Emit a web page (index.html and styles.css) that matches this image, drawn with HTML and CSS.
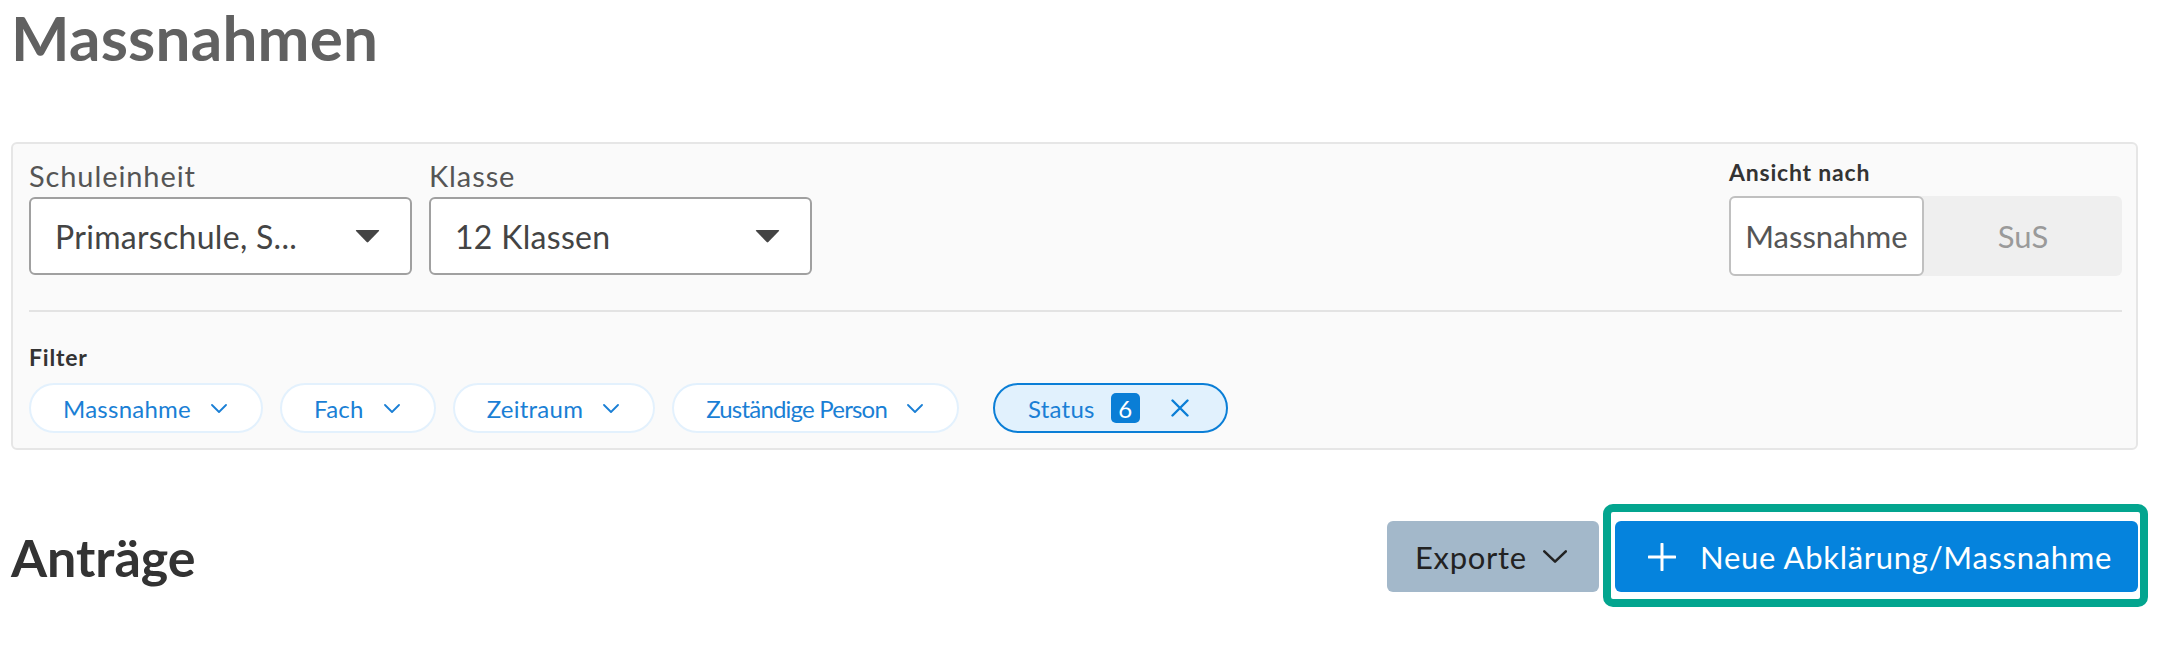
FILE: index.html
```html
<!DOCTYPE html>
<html lang="de">
<head>
<meta charset="utf-8">
<title>Massnahmen</title>
<link rel="stylesheet" href="styles.css">
</head>
<body>
<div class="page">
  <h1 class="title">Massnahmen</h1>

  <section class="panel">
    <div class="top-row">
      <div class="selects">
        <div class="field">
          <div class="field-label">Schuleinheit</div>
          <div class="select">
            <span class="select-value">Primarschule, S...</span>
            <svg class="caret" viewBox="0 0 25 14" width="25" height="14"><path d="M1.5 1 H23.5 Q24.6 1 24 2 L13.3 13 Q12.5 13.8 11.7 13 L1 2 Q0.4 1 1.5 1 Z" fill="#444"/></svg>
          </div>
        </div>
        <div class="field">
          <div class="field-label">Klasse</div>
          <div class="select">
            <span class="select-value">12 Klassen</span>
            <svg class="caret" viewBox="0 0 25 14" width="25" height="14"><path d="M1.5 1 H23.5 Q24.6 1 24 2 L13.3 13 Q12.5 13.8 11.7 13 L1 2 Q0.4 1 1.5 1 Z" fill="#444"/></svg>
          </div>
        </div>
      </div>
      <div class="view">
        <div class="small-label">Ansicht nach</div>
        <div class="toggle">
          <div class="seg seg-active">Massnahme</div>
          <div class="seg">SuS</div>
        </div>
      </div>
    </div>

    <div class="divider"></div>

    <div class="small-label">Filter</div>
    <div class="chips">
      <div class="chip">Massnahme<svg class="chev" viewBox="0 0 16 9" width="16" height="9"><polyline points="1,1 8,8 15,1" fill="none" stroke="#1a7fd5" stroke-width="1.8" stroke-linecap="round" stroke-linejoin="round"/></svg></div>
      <div class="chip">Fach<svg class="chev" viewBox="0 0 16 9" width="16" height="9"><polyline points="1,1 8,8 15,1" fill="none" stroke="#1a7fd5" stroke-width="1.8" stroke-linecap="round" stroke-linejoin="round"/></svg></div>
      <div class="chip">Zeitraum<svg class="chev" viewBox="0 0 16 9" width="16" height="9"><polyline points="1,1 8,8 15,1" fill="none" stroke="#1a7fd5" stroke-width="1.8" stroke-linecap="round" stroke-linejoin="round"/></svg></div>
      <div class="chip chip-narrow">Zuständige Person<svg class="chev" viewBox="0 0 16 9" width="16" height="9"><polyline points="1,1 8,8 15,1" fill="none" stroke="#1a7fd5" stroke-width="1.8" stroke-linecap="round" stroke-linejoin="round"/></svg></div>
      <div class="chip chip-active">Status<span class="badge">6</span><svg class="close" viewBox="0 0 18 18" width="18" height="18"><path d="M1.5 1.5 L16.5 16.5 M16.5 1.5 L1.5 16.5" fill="none" stroke="#0a7ed6" stroke-width="2.4" stroke-linecap="round"/></svg></div>
    </div>
  </section>

  <div class="section-row">
    <h2 class="section-title">Anträge</h2>
    <div class="actions">
      <button class="btn btn-export">Exporte<svg class="chev-lg" viewBox="0 0 28 15" width="28" height="15"><polyline points="1.5,1.5 14,13.5 26.5,1.5" fill="none" stroke="#222" stroke-width="3" stroke-linecap="round" stroke-linejoin="round"/></svg></button>
      <div class="highlight-wrap">
        <button class="btn btn-primary"><svg class="plus" viewBox="0 0 28 28" width="28" height="28"><path d="M14 1 V27 M1 14 H27" fill="none" stroke="#fff" stroke-width="3" stroke-linecap="round"/></svg>Neue Abklärung/Massnahme</button>
        <div class="highlight"></div>
      </div>
    </div>
  </div>
</div>
</body>
</html>
```

FILE: styles.css
```css
* { box-sizing: border-box; }

html, body {
  margin: 0;
  padding: 0;
  background: #ffffff;
}

body {
  font-family: "Lato", "Noto Sans", sans-serif;
  color: #333;
}

.page {
  min-height: 654px;
  padding: 0 28px 0 11px;
}

.title {
  margin: 0;
  font-size: 62px;
  line-height: 1.2;
  font-weight: 700;
  color: #616161;
  letter-spacing: 0.2px;
}

.panel {
  margin-top: 68px;
  border: 2px solid #e6e6e6;
  border-radius: 6px;
  background: #fafafa;
  padding: 15px 14px 15px 16px;
}

.top-row {
  display: flex;
  justify-content: space-between;
  align-items: flex-start;
}

.selects {
  display: flex;
  gap: 17px;
}

.field {
  display: flex;
  flex-direction: column;
}

.field-label {
  font-size: 29px;
  line-height: 34px;
  letter-spacing: 0.9px;
  color: #555;
  margin-bottom: 4px;
}

.select {
  width: 383px;
  height: 78px;
  border: 2px solid #a0a0a0;
  border-radius: 6px;
  background: #fff;
  display: flex;
  align-items: center;
  justify-content: space-between;
  padding: 0 30px 0 24px;
}

.select-value {
  font-size: 32px;
  letter-spacing: 0.3px;
  color: #444;
  white-space: nowrap;
}

.caret { display: block; }

.view {
  display: flex;
  flex-direction: column;
}

.small-label {
  font-size: 23px;
  line-height: 27px;
  font-weight: 700;
  letter-spacing: 0.8px;
  color: #333;
}

.view .small-label {
  margin-bottom: 10px;
}

.toggle {
  width: 393px;
  height: 80px;
  background: #efefef;
  border-radius: 6px;
  display: flex;
}

.seg {
  flex: 1;
  display: flex;
  align-items: center;
  justify-content: center;
  font-size: 31px;
  color: #9a9a9a;
}

.seg-active {
  flex: 0 0 195px;
  background: #fff;
  border: 2px solid #c0c0c0;
  border-radius: 6px;
  color: #555;
}

.divider {
  height: 2px;
  background: #e3e3e3;
  margin: 34px 0 32px;
}

.chips {
  display: flex;
  gap: 17px;
  margin-top: 12px;
}

.chip {
  height: 50px;
  border: 2px solid #e3f1fd;
  border-radius: 25px;
  background: #fff;
  display: flex;
  align-items: center;
  padding: 0 34px 0 32px;
  font-size: 24px;
  letter-spacing: 0.25px;
  color: #1a7fd5;
  white-space: nowrap;
}

.chip-narrow {
  letter-spacing: -0.8px;
}

.chev {
  margin-left: 20px;
  display: block;
}

.chip-active {
  margin-left: 17px;
  border-color: #0a7ed6;
  background: #e1f1fd;
  padding: 0 37px 0 33px;
}

.badge {
  margin-left: 16px;
  width: 29px;
  height: 30px;
  border-radius: 5px;
  background: #0a7ed6;
  color: #fff;
  font-size: 24px;
  display: flex;
  align-items: center;
  justify-content: center;
}

.close {
  margin-left: 31px;
  display: block;
}

.section-row {
  margin-top: 71px;
  display: flex;
  justify-content: space-between;
  align-items: center;
}

.section-title {
  margin: 0;
  font-size: 52px;
  line-height: 1.2;
  font-weight: 700;
  color: #333;
}

.actions {
  display: flex;
  gap: 16px;
}

.btn {
  height: 71px;
  border: none;
  border-radius: 6px;
  font-family: "Lato", "Noto Sans", sans-serif;
  font-size: 31px;
  letter-spacing: 0.7px;
  white-space: nowrap;
  display: flex;
  align-items: center;
  cursor: pointer;
}

.btn-export {
  width: 212px;
  background: #a3b8ca;
  color: #222;
  padding: 0 32px 0 28px;
}

.chev-lg {
  margin-left: 16px;
  display: block;
}

.highlight-wrap {
  position: relative;
}

.btn-primary {
  width: 523px;
  background: #0583dd;
  color: #fff;
  padding: 0 20px 0 33px;
}

.plus {
  margin-right: 24px;
  display: block;
  flex: none;
}

.highlight {
  position: absolute;
  left: -12px;
  top: -17px;
  right: -10px;
  bottom: -15px;
  border: 8px solid #03a58f;
  border-radius: 10px;
  pointer-events: none;
}
```
